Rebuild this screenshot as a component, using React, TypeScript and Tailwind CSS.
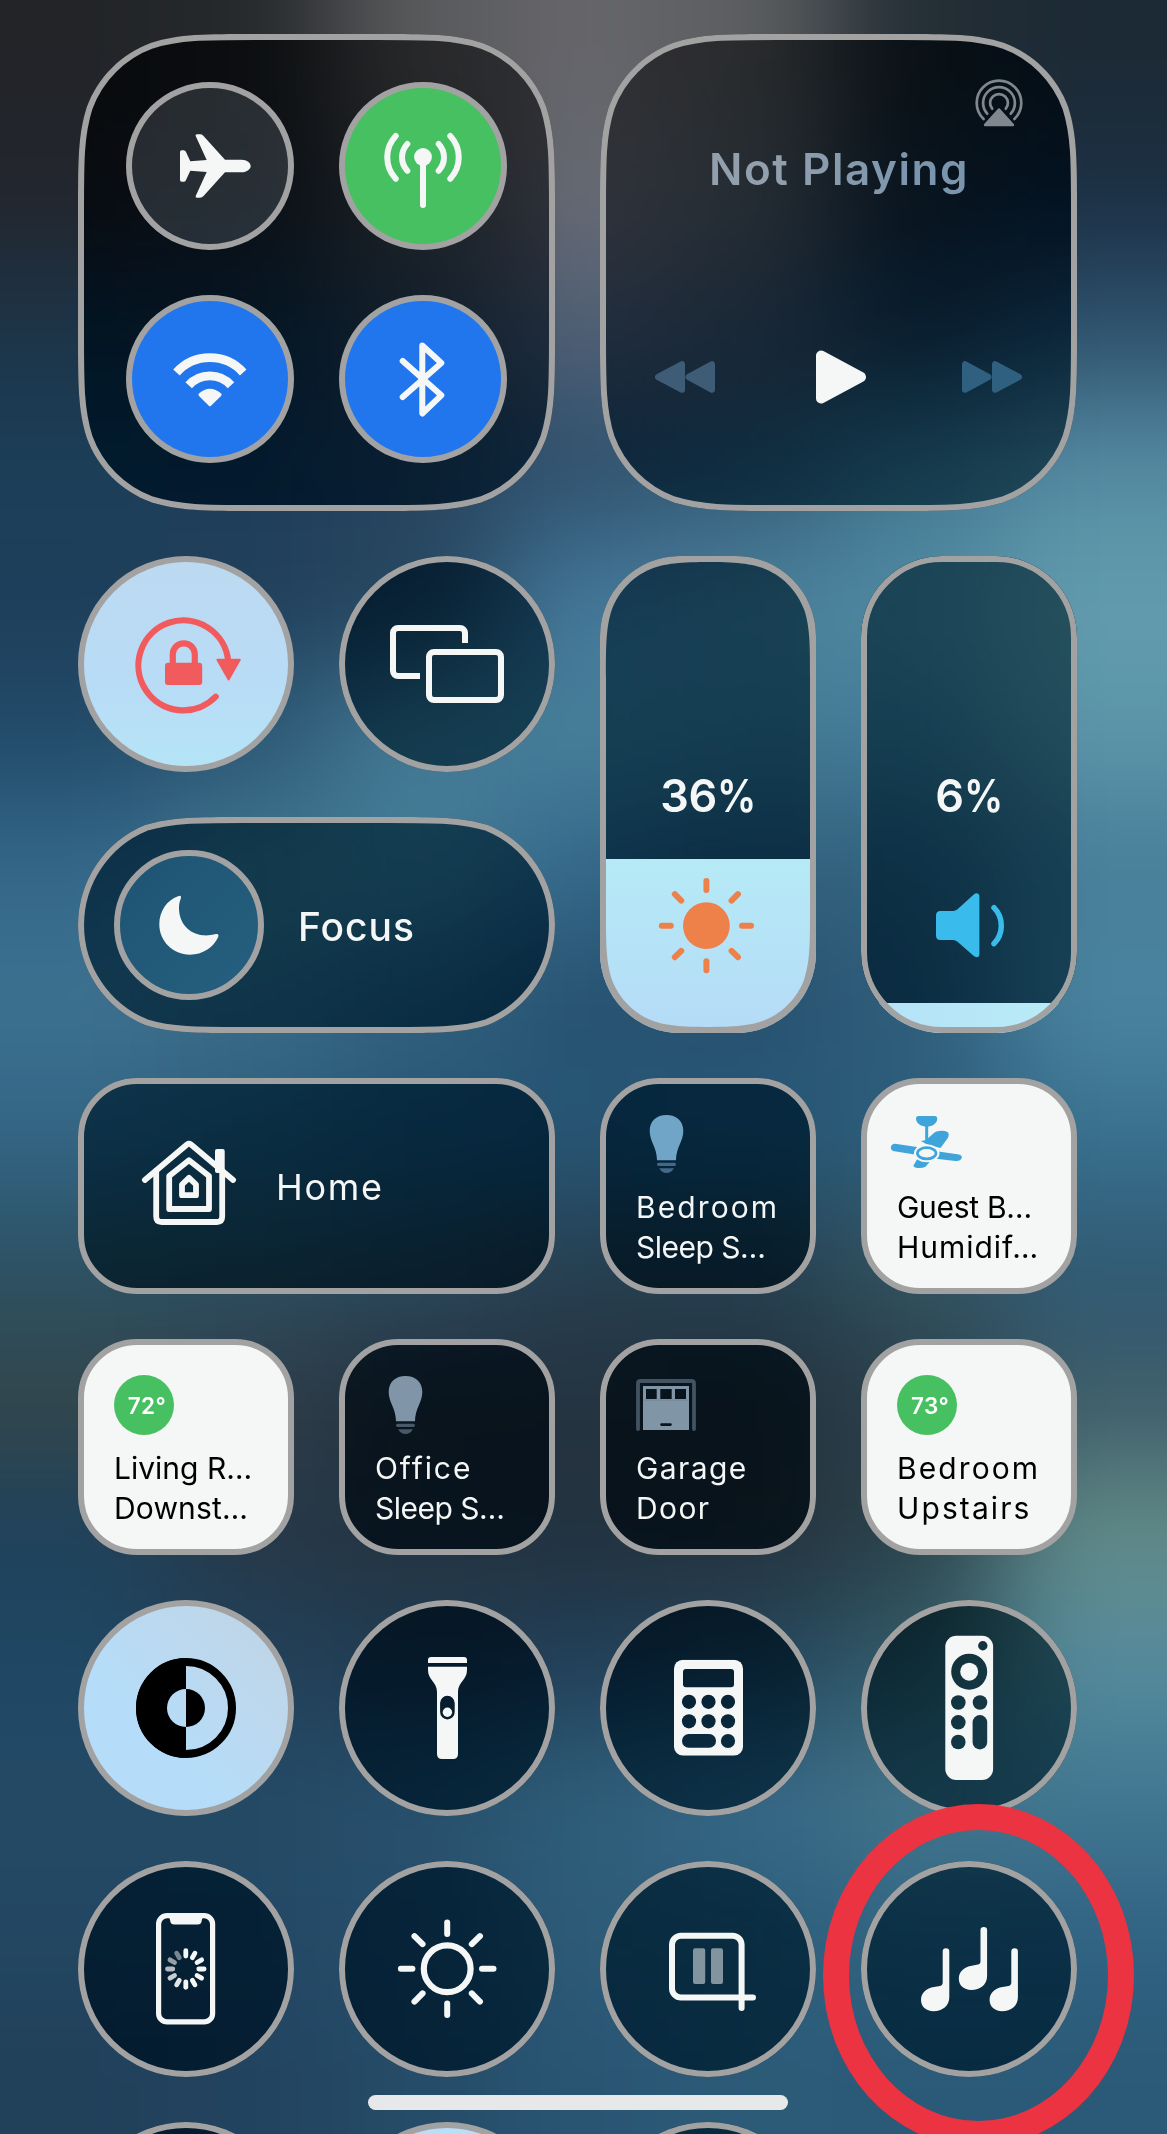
import type { ReactNode } from "react";

/* Wallpaper colour samples, 7 columns x 16 rows, top to bottom. */
const WALLPAPER: string[][] = [
  ["#222428", "#26292c", "#595a5c", "#66666b", "#5c5e60", "#242e35", "#1c2a35"],
  ["#23262e", "#262c34", "#454a51", "#696c76", "#55606a", "#233240", "#1b3045"],
  ["#1c3549", "#1f374b", "#35485a", "#506077", "#425569", "#26425a", "#2f536f"],
  ["#1c3f59", "#1e3e5a", "#284560", "#2f516d", "#345b77", "#437991", "#558ba3"],
  ["#1e3e5a", "#213f5b", "#26465f", "#44789a", "#4a809b", "#518aa3", "#629cad"],
  ["#224b69", "#2c5876", "#447a95", "#47809a", "#437a95", "#457c96", "#5c95a9"],
  ["#34678a", "#41778f", "#437b95", "#35688a", "#315f7d", "#33637f", "#477e99"],
  ["#3d7290", "#3a6c88", "#305f7e", "#275270", "#27516f", "#2f5d7a", "#4b84a0"],
  ["#336585", "#2e5f7c", "#285876", "#275676", "#285877", "#2c5e7d", "#39718f"],
  ["#2c5163", "#2c4e60", "#2b485c", "#263f50", "#243f50", "#34535f", "#305a74"],
  ["#33464b", "#303d48", "#25333f", "#253340", "#24323d", "#2a3f4b", "#3e5d69"],
  ["#1f425c", "#263848", "#243442", "#22323e", "#25323c", "#2b424a", "#628b88"],
  ["#1f4763", "#22415a", "#213c52", "#22405a", "#24475f", "#335c6a", "#558b9d"],
  ["#244a66", "#244a66", "#28506d", "#2e5f7a", "#376988", "#43758b", "#417791"],
  ["#234762", "#234865", "#274e6b", "#2d5b78", "#2d5d7a", "#326684", "#316383"],
  ["#21405a", "#22435f", "#254c68", "#295573", "#2c5b78", "#2a5a78", "#2a5a77"],
];

function padEnds<T>(list: T[]): T[] {
  return [list[0], ...list, list[list.length - 1]];
}

function Wallpaper() {
  return (
    <div className="absolute -left-[167px] -top-[133px] grid h-[2400px] w-[1501px] grid-cols-9 grid-rows-[repeat(18,minmax(0,1fr))] blur-[56px]">
      {padEnds(WALLPAPER.map(padEnds)).flatMap((row, r) =>
        row.map((color, c) => <div key={`${r}-${c}`} style={{ backgroundColor: color }} />),
      )}
    </div>
  );
}

/* Rounded rectangle with continuous-curvature corners. */
function squircle(w: number, h: number, r: number, o = 0) {
  const a = 1.528665 * r, b = 1.088493 * r, c = 0.868407 * r, d = 0.631494 * r;
  const e = 0.372824 * r, f = 0.16906 * r, g = 0.074911 * r;
  const p = (x: number, y: number) => `${(x + o).toFixed(2)} ${(y + o).toFixed(2)}`;
  return [
    `M${p(a, 0)}L${p(w - a, 0)}`,
    `C${p(w - b, 0)} ${p(w - c, 0)} ${p(w - d, g)}`,
    `C${p(w - e, f)} ${p(w - f, e)} ${p(w - g, d)}`,
    `C${p(w, c)} ${p(w, b)} ${p(w, a)}L${p(w, h - a)}`,
    `C${p(w, h - b)} ${p(w, h - c)} ${p(w - g, h - d)}`,
    `C${p(w - f, h - e)} ${p(w - e, h - f)} ${p(w - d, h - g)}`,
    `C${p(w - c, h)} ${p(w - b, h)} ${p(w - a, h)}L${p(a, h)}`,
    `C${p(b, h)} ${p(c, h)} ${p(d, h - g)}`,
    `C${p(e, h - f)} ${p(f, h - e)} ${p(g, h - d)}`,
    `C${p(0, h - c)} ${p(0, h - b)} ${p(0, h - a)}L${p(0, a)}`,
    `C${p(0, b)} ${p(0, c)} ${p(g, d)}`,
    `C${p(f, e)} ${p(e, f)} ${p(d, g)}`,
    `C${p(c, 0)} ${p(b, 0)} ${p(a, 0)}Z`,
  ].join("");
}

const CARD_PATH = squircle(477, 477, 116);
const PILL_PATH =
  "M165 0H312C359.5 0 383.2 0 410 8.1A108 108 0 0 1 410 207.9C383.2 216 359.5 216 312 216H165C117.5 216 93.8 216 67 207.9A108 108 0 0 1 67 8.1C93.8 0 117.5 0 165 0Z";

const GLASS = "backdrop-brightness-[.53] backdrop-contrast-[1.08] backdrop-saturate-[1.28]";

function Shaped({ path, h, className, children }: { path: string; h: number; className: string; children: ReactNode }) {
  return (
    <section className={`relative col-span-2 ${GLASS} ${className}`} style={{ clipPath: `path("${path}")` }}>
      {children}
      <svg className="pointer-events-none absolute inset-0" width="477" height={h} fill="none">
        <path d={path} stroke="#a2a2a2" strokeWidth="12" />
      </svg>
    </section>
  );
}

function Toggle({ className, children }: { className: string; children: ReactNode }) {
  return (
    <button className={`size-[168px] rounded-full border-[6px] border-[#a2a2a2] ${className}`}>
      <svg viewBox="6 6 156 156" className="size-full" fill="#f5f7f7">
        {children}
      </svg>
    </button>
  );
}

function Connectivity() {
  return (
    <Shaped path={CARD_PATH} h={477} className="row-span-2 grid grid-cols-2 gap-[45px] p-12">
      <Toggle className="bg-[#9ca8b4]/20">
        <path d="M54 70q0-1.7 1.7-1.7h2q1.5 0 2.2 1.5L64.3 79.3 80.7 78 69.8 54.2q-.8-1.9 1.2-1.9h3q2 0 3.3 1.4L99 77.7h16.500c5.500 0 9.200 3.300 9.200 6.300s-3.700 6.300-9.200 6.300H99L77.300 114.300q-1.300 1.400-3.300 1.400h-3q-2 0-1.200-1.900L80.700 90 64.300 88.700 59.900 98.200q-.7 1.500-2.200 1.500h-2Q54 99.700 54 98z" />
      </Toggle>
      <Toggle className="bg-[#46c060]">
        <circle cx="84" cy="75" r="8.900" />
        <g fill="none" stroke="#f5f7f7" strokeWidth="6" strokeLinecap="round">
          <path d="M84 75V123" />
          <path d="M99.700 62A19.500 19.500 0 0 1 99.700 88.700M68.300 62A19.500 19.500 0 0 0 68.300 88.700" />
          <path d="M111.300 54A31.200 31.200 0 0 1 111.300 96.700M56.700 54A31.200 31.200 0 0 0 56.700 96.700" />
        </g>
      </Toggle>
      <Toggle className="bg-[#2176ee]">
        <g fill="none" stroke="#f5f7f7" strokeWidth="8.800">
          <path d="M50.500 77.500A45 45 0 0 1 117.200 77.500" />
          <path d="M62.700 90.300A28.500 28.500 0 0 1 105 90.300" />
        </g>
        <path d="M72.800 98.600Q84 88.800 95.200 98.600 96.200 99.800 95 101L85 110.800Q83.900 111.800 82.800 110.800L73 101Q71.800 99.800 72.800 98.600Z" />
      </Toggle>
      <Toggle className="bg-[#2176ee]">
        <path d="M63.700 66 102.300 100.300 83.300 118.500V50.500L102.300 68 63.700 102" fill="none" stroke="#f5f7f7" strokeWidth="6" strokeLinecap="round" strokeLinejoin="round" />
      </Toggle>
    </Shaped>
  );
}

function DoubleArrow({ className }: { className: string }) {
  return (
    <svg width="61" height="34" className={className} fill="currentColor" stroke="currentColor" strokeWidth="6" strokeLinejoin="round">
      <path d="M3 4.200V29.800L26.500 17ZM33 4.200V29.800L57 17Z" />
    </svg>
  );
}

function NowPlaying() {
  return (
    <Shaped path={CARD_PATH} h={477} className="row-span-2 flex flex-col pt-[43px]">
      <div className="flex justify-end pr-[52px]">
        <svg width="52" height="52" fill="none" stroke="#80878e" strokeWidth="2.700" strokeLinecap="round">
          <path d="M10.600 42A22.300 22.300 0 1 1 41.400 42" />
          <path d="M14.200 36.700A15.900 15.900 0 1 1 37.800 36.700" />
          <path d="M19.200 31.700A8.900 8.900 0 1 1 32.800 31.700" />
          <path d="M26 32.600 39.800 47.900H12.200Z" fill="#80878e" strokeLinejoin="round" />
        </svg>
      </div>
      <h2 className="pl-[109px] pt-[13px] text-[44px]/[54px] font-semibold tracking-[1.550px]">
        <span className="bg-linear-to-r from-[#929fac] from-25% to-[#7b95ad] to-80% bg-clip-text text-transparent">Not Playing</span>
      </h2>
      <div className="flex items-center justify-between pl-[54px] pr-[54px] pt-[153px]">
        <DoubleArrow className="-scale-x-100 text-[#3f5c77]" />
        <svg width="51" height="56" className="ml-[6px]" fill="#f5f7f7" stroke="#f5f7f7" strokeWidth="10" strokeLinejoin="round">
          <path d="M5 6.500V49.500L45 28Z" />
        </svg>
        <DoubleArrow className="text-[#2f607f]" />
      </div>
    </Shaped>
  );
}

function Round({ className = GLASS, children }: { className?: string; children?: ReactNode }) {
  return (
    <button className={`size-[216px] rounded-full border-[6px] border-[#a2a2a2] ${className}`}>
      <svg viewBox="6 6 204 204" className="size-full" fill="#f5f7f7">
        {children}
      </svg>
    </button>
  );
}

function Focus() {
  return (
    <Shaped path={PILL_PATH} h={216} className="flex items-center pl-9">
      <div className="size-[150px] rounded-full border-[6px] border-[#a2a2a2] bg-linear-to-br from-[#1f5473] to-[#255f7f]">
        <svg viewBox="6 6 138 138" className="size-full" fill="#f5f7f7">
          <path d="M64 46.200C53 50 45.300 61 45.300 74.500 45.300 91 59 104.700 76 104.700 88.500 104.700 99.500 97.500 104.200 87Q105.300 83.600 102 84C98 85.200 93 85.600 89 85.300 75 84 65 73 65 58 65 54.500 65.500 52 66.700 48.800 67.600 45.400 66.500 45.200 64 46.200Z" />
        </svg>
      </div>
      <span className="pl-[34px] pt-1 text-[39px] font-medium tracking-[.95px] text-[#f5f7f7]">Focus</span>
    </Shaped>
  );
}

function Rays({ inner, outer, width, color }: { inner: number; outer: number; width: number; color: string }) {
  return (
    <g stroke={color} strokeWidth={width} strokeLinecap="round">
      {[0, 45, 90, 135, 180, 225, 270, 315].map((a) => (
        <path key={a} d={`M0 ${-inner}V${-outer}`} transform={`rotate(${a})`} />
      ))}
    </g>
  );
}

function Percent({ value }: { value: number }) {
  return (
    <div className="relative flex justify-center pl-[6px] pt-[213px] text-[45px]/[54px] font-semibold tracking-[-0.300px] text-[#f5f7f7]">
      {value}
      <span className="inline-block origin-left scale-x-[.87]">%</span>
    </div>
  );
}

function Brightness() {
  return (
    <section className={`relative row-span-2 h-[477px] w-[216px] overflow-hidden rounded-[80px] ${GLASS}`}>
      <div className="absolute inset-x-0 bottom-0 h-[174px] bg-linear-to-b from-[#b6eaf6] to-[#b5dbf7]" />
      <Percent value={36} />
      <svg className="absolute inset-0" width="216" height="477">
        <g transform="translate(106.400 369.700)">
          <circle r="23.400" fill="#ee8049" />
          <Rays inner={35.600} outer={44.600} width={6} color="#ee8049" />
        </g>
        <path fillRule="evenodd" fill="#a2a2a2" d={`M-2-2H218V479H-2Z${squircle(204, 465, 76, 6)}`} />
      </svg>
    </section>
  );
}

function Volume() {
  return (
    <section className={`relative row-span-2 h-[477px] w-[216px] overflow-hidden rounded-[81px] ${GLASS}`}>
      <div className="absolute inset-x-0 bottom-0 h-[30px] bg-linear-to-r from-[#b5e1f8] to-[#b9edf6]" />
      <Percent value={6} />
      <svg className="absolute inset-0" width="216" height="477" fill="none">
        <path d="M79.500 355H92Q94.500 355 96.500 353.200L112.800 338.500C115 336.500 118.400 337 118.400 340.500V398C118.400 401.500 115 402 112.800 400L96.500 385.800Q94.500 384 92 384H79.500Q75 384 75 379.500V359.500Q75 355 79.500 355Z" fill="#39bcec" />
        <path d="M133 351.700A25.800 25.800 0 0 1 133 387.700" stroke="#39bcec" strokeWidth="5.500" strokeLinecap="round" />
        <rect x="3" y="3" width="210" height="471" rx="78" stroke="#a2a2a2" strokeWidth="6" />
      </svg>
    </section>
  );
}

function Home() {
  return (
    <section className={`col-span-2 flex items-center gap-9 rounded-[59px] border-[6px] border-[#a2a2a2] pl-[54px] ${GLASS}`}>
      <svg viewBox="60 6 102 204" width="102" height="204" fill="none" stroke="#f5f7f7" strokeWidth="5.800" strokeLinecap="round" strokeLinejoin="round">
        <path d="M66.900 102 109 66.500Q111 65 113 66.500L155.100 102" />
        <path d="M78.200 93V138.500Q78.200 144 83.700 144H138.700Q144.200 144 144.200 138.500V93" />
        <path d="M91.200 98 111 82.300 131 98V131H91.200Z" />
        <path d="M104 106.500 111 99.800 118 106.500V117.200H104Z" />
        <rect x="137" y="71" width="9.700" height="24" rx="2" fill="#f5f7f7" stroke="none" />
      </svg>
      <span className="pt-px text-[36px] tracking-[1.700px] text-[#f5f7f7]">Home</span>
    </section>
  );
}

function Accessory({ className, icon, lines }: { className: string; icon: ReactNode; lines: [string, string][] }) {
  return (
    <section className={`size-[216px] rounded-[59px] border-[6px] border-[#a2a2a2] pl-[30px] pt-[30px] ${className}`}>
      <div className="size-[60px]">{icon}</div>
      <div className="pt-[13px] text-[30px]/[40px] whitespace-nowrap">
        {lines.map(([text, spacing]) => (
          <p key={text} className={spacing}>{text}</p>
        ))}
      </div>
    </section>
  );
}

function Bulb({ bulb, base }: { bulb: string; base: string }) {
  return (
    <svg width="60" height="60" fill={base}>
      <path fill={bulb} d="M21 46.300C21 33 13.700 28 13.700 17 13.700 7 20.500 1 30.500 1S47.300 7 47.300 17C47.300 28 40 33 40 46.300Z" />
      <rect x="21" y="48.700" width="19" height="3.200" rx="1.600" />
      <path d="M23.200 54.300H37.800C36.500 57.500 33.500 59 30.500 59S24.500 57.500 23.200 54.300Z" />
    </svg>
  );
}

function Fan() {
  return (
    <svg width="60" height="60" className="overflow-visible" fill="#3fa4da">
      <path d="M21.500 2H38Q40.300 2 40.300 4.500C40.300 9.500 35 12.700 29.700 12.700S19 9.500 19 4.500Q19 2 21.500 2Z" />
      <rect x="28.200" y="12" width="3" height="16" />
      <path d="M24 27 29 26 37.500 18.500Q39 17 42 17 51.700 16.200 51.700 20.500 51.700 22.500 50.500 24.500L43.500 34 30 30.500Z" />
      <path d="M-2 29.800 20 33 17.500 40.600-4 37Q-7.500 34.500-5.500 31.500-4.500 29.700-2 29.800Z" />
      <path d="M41.500 37.500 62 40.500Q66 42 64.500 44.300 63.500 47.200 58.500 46.900L39 44.800Z" />
      <path d="M20.500 44.500 33 47.500 28.500 52.800Q25 54.400 20 53.900 16.500 53.500 16.500 51.500Z" />
      <ellipse cx="29.700" cy="39.300" rx="12.800" ry="9" fill="#f5f7f7" />
      <ellipse cx="29.700" cy="39.300" rx="9.300" ry="5.600" fill="#f5f7f7" stroke="#3fa4da" strokeWidth="2.700" />
    </svg>
  );
}

function Garage() {
  return (
    <svg width="60" height="60">
      <path d="M2 54V8.500Q2 6 4.500 6H55.500Q58 6 58 8.500V54" fill="none" stroke="#445361" strokeWidth="3.800" strokeLinecap="round" />
      <path fill="#8095a6" fillRule="evenodd" d="M7 11H53V55H7ZM10 14V24H20.700V14ZM24.300 14V24H35.700V14ZM39 14V24H50V14ZM25.500 48.300A1.300 1.300 0 0 0 25.500 50.900H34.500A1.300 1.300 0 0 0 34.500 48.300Z" />
      <path d="M7 25.200H53" stroke="#6d8192" strokeWidth=".7" />
    </svg>
  );
}

function Temperature({ value }: { value: string }) {
  return (
    <div className="flex size-[60px] items-center justify-center rounded-full bg-[#46c060] pl-[6px] pt-[2px] text-[22.500px] font-semibold tracking-[.4px] text-white">
      {value}
    </div>
  );
}

const WHITE = "bg-[#f5f7f7] text-black";
const DIM = "text-[#f5f7f7] backdrop-brightness-[.53] backdrop-contrast-[1.08] backdrop-saturate-[1.28]";
const NOTE =
  "M81.700 90.500a3.300 3.300 0 0 1 6.600 0V136C88.300 145 81.500 150.200 72.500 150.200 65 150.200 60 145.500 60 139 60 131.500 65.500 127.300 73 126L79 124.900Q81.700 124.300 81.700 121.500Z";
const TICKS = [1, 1, 1, 1, 1, 1, 1, 0.92, 0.82, 0.72, 0.6, 0.48];

export default function App() {
  return (
    <main className="relative h-[2134px] w-[1167px] overflow-hidden bg-[#2a4a62] font-['Inter',sans-serif]">
      <Wallpaper />
      <div className="relative grid auto-rows-[216px] grid-cols-[repeat(4,216px)] gap-[45px] pl-[78px] pt-[34px]">
        <Connectivity />
        <NowPlaying />

        <Round className="bg-linear-to-b from-[#bdd9f2] via-[#b8dcf6] via-60% to-[#b5e4f6]">
          <g fill="none" stroke="#f15b5d" strokeWidth="6.200" strokeLinecap="round">
            <path d="M137.700 140.700A45 45 0 1 1 150.200 105" />
            <path d="M94.800 108V98.300A11 11 0 0 1 116.800 98.300V108" />
          </g>
          <rect x="87" y="106.700" width="37.200" height="22.300" rx="3" fill="#f15b5d" />
          <path d="M139.400 103.800H161.800L150.600 123.500Z" fill="#f15b5d" stroke="#f15b5d" strokeWidth="2" strokeLinejoin="round" />
        </Round>
        <Round>
          <g fill="none" stroke="#f5f7f7" strokeWidth="6">
            <rect x="90" y="96" width="72" height="48" rx="5" />
            <path d="M126 87V77A5 5 0 0 0 121 72H59A5 5 0 0 0 54 77V115A5 5 0 0 0 59 120H81" />
          </g>
        </Round>
        <Brightness />
        <Volume />
        <Focus />

        <Home />
        <Accessory className={DIM} icon={<Bulb bulb="#70a5c8" base="#42698a" />} lines={[["Bedroom", "tracking-[2.100px]"], ["Sleep S…", "tracking-[-0.500px]"]]} />
        <Accessory className={WHITE} icon={<Fan />} lines={[["Guest B…", "tracking-[-0.300px]"], ["Humidif…", "tracking-[.95px]"]]} />

        <Accessory className={WHITE} icon={<Temperature value="72°" />} lines={[["Living R…", "tracking-normal"], ["Downst…", "tracking-[.15px]"]]} />
        <Accessory className={DIM} icon={<Bulb bulb="#8096a8" base="#48596a" />} lines={[["Office", "tracking-[1.900px]"], ["Sleep S…", "tracking-[-0.500px]"]]} />
        <Accessory className={DIM} icon={<Garage />} lines={[["Garage", "tracking-[1.400px]"], ["Door", "tracking-[1.400px]"]]} />
        <Accessory className={WHITE} icon={<Temperature value="73°" />} lines={[["Bedroom", "tracking-[2.100px]"], ["Upstairs", "tracking-[2.100px]"]]} />

        <Round className="bg-linear-to-tr from-[#b5ddf9] from-35% to-[#c0d5e7] to-90%">
          <g fill="#000">
            <circle cx="108" cy="108" r="46" fill="none" stroke="#000" strokeWidth="8" />
            <path fillRule="evenodd" d="M108 58A50 50 0 0 0 108 158V127A19 19 0 0 1 108 89Z" />
            <path d="M108 89A19 19 0 0 1 108 127Z" />
          </g>
        </Round>
        <Round>
          <path d="M89 63V60Q89 57 92 57H125Q128 57 128 60V63Z" />
          <path fillRule="evenodd" d="M89 66.800H128V70C128 80 119 82 119 92V154Q119 159 114 159H103Q98 159 98 154V92C98 82 89 80 89 70ZM108.400 95.800A7.300 7.300 0 0 0 101.100 103.100V112.100A7.300 7.300 0 0 0 115.700 112.100V103.100A7.300 7.300 0 0 0 108.400 95.800Z" />
          <circle cx="108.400" cy="112.300" r="4.700" />
        </Round>
        <Round>
          <mask id="calc-keys" maskUnits="userSpaceOnUse" x="70" y="55" width="80" height="106" fill="#000">
            <rect x="74" y="59.700" width="69" height="96" rx="9" fill="#fff" />
            <rect x="83" y="69" width="51" height="18.200" rx="3" />
            {[101.800, 121.300, 141].map((cy) =>
              [89, 108.500, 128]
                .filter((cx) => cy < 140 || cx === 128)
                .map((cx) => <circle key={`${cx}-${cy}`} cx={cx} cy={cy} r={7.100} />),
            )}
            <rect x="82" y="134" width="34" height="13.700" rx="6.800" />
          </mask>
          <rect x="74" y="59.700" width="69" height="96" mask="url(#calc-keys)" />
        </Round>
        <Round>
          <mask id="remote-keys" maskUnits="userSpaceOnUse" x="80" y="30" width="60" height="156" fill="#000">
            <rect x="84.300" y="35.700" width="47.800" height="144.300" rx="11" fill="#fff" />
            <circle cx="121.800" cy="45.700" r="4.700" />
            <circle cx="108.200" cy="71.700" r="18" />
            <circle cx="108.200" cy="71.700" r="9" fill="#fff" />
            <circle cx="97.300" cy="102.500" r="7.300" />
            <circle cx="119" cy="102.500" r="7.300" />
            <circle cx="97.300" cy="122.300" r="7.300" />
            <circle cx="97.300" cy="142" r="7.300" />
            <rect x="111.600" y="115" width="14.600" height="34.500" rx="7.300" />
          </mask>
          <rect x="84" y="35" width="49" height="146" mask="url(#remote-keys)" />
        </Round>

        <Round>
          <rect x="80.600" y="54.600" width="54" height="106.300" rx="8.500" fill="none" stroke="#f5f7f7" strokeWidth="5.200" />
          <path d="M90 55H126Q123.700 57.500 123.700 59.500 123.700 63.600 119.500 63.600H96.500Q92.200 63.600 92.200 59.500 92.200 57.500 90 55Z" />
          <g transform="translate(107.800 108)" stroke="#f5f7f7" strokeWidth="4.800" strokeLinecap="round">
            {TICKS.map((opacity, i) => (
              <path key={i} d="M0-13V-18.300" opacity={opacity} transform={`rotate(${i * 30})`} />
            ))}
          </g>
        </Round>
        <Round>
          <g transform="translate(108.200 107.800)">
            <circle r="23.400" fill="none" stroke="#f5f7f7" strokeWidth="6.200" />
            <Rays inner={34.800} outer={46.300} width={6} color="#f5f7f7" />
          </g>
        </Round>
        <Round>
          <path d="M153 136.600H81A9 9 0 0 1 72 127.600V83.800A9 9 0 0 1 81 74.800H132.600A9 9 0 0 1 141.600 83.800V147" fill="none" stroke="#f5f7f7" strokeWidth="6" strokeLinecap="round" />
          <g fill="#84949e">
            <rect x="93" y="87.300" width="12.200" height="35.700" rx="2" />
            <rect x="111" y="87.300" width="12" height="35.700" rx="2" />
          </g>
        </Round>
        <Round>
          <path d={NOTE} />
          <path d={NOTE} transform="translate(37.800 -21.300)" />
          <path d={NOTE} transform="translate(68.600 0)" />
        </Round>

        <Round />
        <Round className="bg-[#b9def8]" />
        <Round />
      </div>
      <div className="absolute left-[368px] top-[2095px] h-[15px] w-[420px] rounded-full bg-[#e7e8e9]" />
      <div className="absolute left-[823px] top-[1804px] h-[343px] w-[311px] rounded-[50%] border-[26px] border-[#ec3341]" />
    </main>
  );
}
